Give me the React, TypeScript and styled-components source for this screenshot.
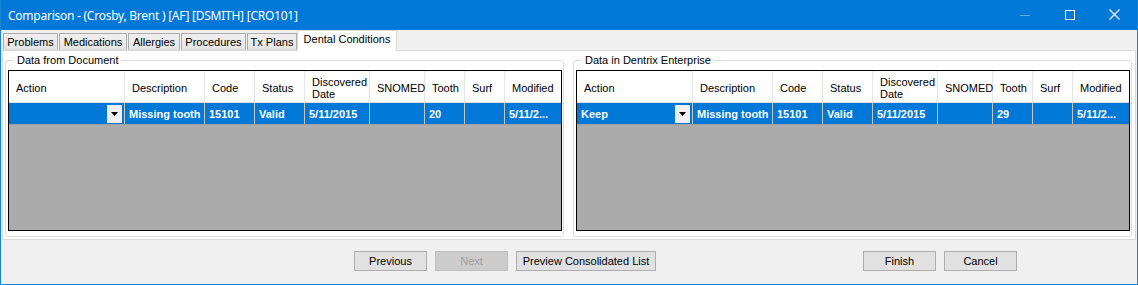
import styled, { createGlobalStyle } from "styled-components";

const GlobalStyle = createGlobalStyle`
  html, body {
    margin: 0;
    padding: 0;
    background: #ffffff;
  }
  * {
    box-sizing: border-box;
  }
`;

type Column = { title: string; width: number };

const columns: Column[] = [
  { title: "Action", width: 116 },
  { title: "Description", width: 80 },
  { title: "Code", width: 50 },
  { title: "Status", width: 50 },
  { title: "Discovered Date", width: 65 },
  { title: "SNOMED", width: 55 },
  { title: "Tooth", width: 40 },
  { title: "Surf", width: 40 },
  { title: "Modified", width: 56 },
];

const tabs = [
  { label: "Problems", width: 55 },
  { label: "Medications", width: 68 },
  { label: "Allergies", width: 52 },
  { label: "Procedures", width: 65 },
  { label: "Tx Plans", width: 50 },
  { label: "Dental Conditions", width: 100, active: true },
];

type Row = {
  action: string;
  description: string;
  code: string;
  status: string;
  discovered: string;
  snomed: string;
  tooth: string;
  surf: string;
  modified: string;
};

function ConditionsGrid({ row }: { row: Row }) {
  const values = [
    row.description,
    row.code,
    row.status,
    row.discovered,
    row.snomed,
    row.tooth,
    row.surf,
    row.modified,
  ];
  return (
    <Grid>
      <HeaderRow>
        {columns.map((c) => (
          <HeaderCell key={c.title} $width={c.width}>
            {c.title === "Discovered Date" ? (
              <span>
                Discovered
                <br />
                Date
              </span>
            ) : (
              c.title
            )}
          </HeaderCell>
        ))}
      </HeaderRow>
      <DataRow>
        <DataCell $width={columns[0].width}>
          <span>{row.action}</span>
          <DropButton>
            <svg width="7" height="4" viewBox="0 0 7 4">
              <path d="M0 0h7L3.5 4z" fill="#000" />
            </svg>
          </DropButton>
        </DataCell>
        {values.map((v, i) => (
          <DataCell key={i} $width={columns[i + 1].width}>
            {v}
          </DataCell>
        ))}
      </DataRow>
      <Filler />
    </Grid>
  );
}

export default function App() {
  return (
    <>
      <GlobalStyle />
      <Window>
        <TitleBar>
          <Title>Comparison - (Crosby, Brent ) [AF] [DSMITH] [CRO101]</Title>
          <Controls>
            <ControlButton>
              <svg width="10" height="10" viewBox="0 0 10 10">
                <path d="M0 5.5h10" stroke="#66aee8" strokeWidth="1" />
              </svg>
            </ControlButton>
            <ControlButton>
              <svg width="10" height="10" viewBox="0 0 10 10">
                <rect x="0.5" y="0.5" width="9" height="9" fill="none" stroke="#fff" strokeWidth="1" />
              </svg>
            </ControlButton>
            <ControlButton>
              <svg width="11" height="11" viewBox="0 0 11 11">
                <path d="M0.5 0.5l10 10M10.5 0.5l-10 10" stroke="#fff" strokeWidth="1.1" />
              </svg>
            </ControlButton>
          </Controls>
        </TitleBar>

        <TabStrip>
          {tabs.map((t) => (
            <Tab key={t.label} $width={t.width} $active={!!t.active}>
              {t.label}
            </Tab>
          ))}
        </TabStrip>

        <TabPage>
          <GroupBox>
            <Legend>Data from Document</Legend>
            <ConditionsGrid
              row={{
                action: "",
                description: "Missing tooth",
                code: "15101",
                status: "Valid",
                discovered: "5/11/2015",
                snomed: "",
                tooth: "20",
                surf: "",
                modified: "5/11/2...",
              }}
            />
          </GroupBox>
          <GroupBox>
            <Legend>Data in Dentrix Enterprise</Legend>
            <ConditionsGrid
              row={{
                action: "Keep",
                description: "Missing tooth",
                code: "15101",
                status: "Valid",
                discovered: "5/11/2015",
                snomed: "",
                tooth: "29",
                surf: "",
                modified: "5/11/2...",
              }}
            />
          </GroupBox>
        </TabPage>

        <Footer>
          <ButtonGroup>
            <Button $width={73}>Previous</Button>
            <Button $width={73} disabled>
              Next
            </Button>
            <Button $width={140}>Preview Consolidated List</Button>
          </ButtonGroup>
          <ButtonGroup $offset={207}>
            <Button $width={73}>Finish</Button>
            <Button $width={73}>Cancel</Button>
          </ButtonGroup>
        </Footer>
      </Window>
    </>
  );
}

const Window = styled.div`
  width: 1138px;
  height: 285px;
  background: #f0f0f0;
  border: 1px solid #1883d7;
  border-top: none;
  display: flex;
  flex-direction: column;
  font-family: "Liberation Sans", Arial, sans-serif;
  font-size: 11px;
  color: #000;
  overflow: hidden;
`;

const TitleBar = styled.div`
  height: 30px;
  margin: 0 -1px;
  background: #0078d7;
  display: flex;
  align-items: center;
  justify-content: space-between;
  padding-left: 8px;
`;

const Title = styled.div`
  color: #ffffff;
  font-family: "Noto Sans", "Open Sans", sans-serif;
  font-size: 12px;
  letter-spacing: -0.25px;
`;

const Controls = styled.div`
  display: flex;
  height: 100%;
  margin-right: 1px;
`;

const ControlButton = styled.div`
  width: 45px;
  height: 100%;
  display: flex;
  align-items: center;
  justify-content: center;
  padding-bottom: 1px;
`;

const TabStrip = styled.div`
  height: 20px;
  display: flex;
  align-items: flex-end;
  padding-left: 2px;
  gap: 1px;
  position: relative;
  z-index: 1;
`;

const Tab = styled.div<{ $width: number; $active: boolean }>`
  width: ${({ $width }) => $width}px;
  height: ${({ $active }) => ($active ? 21 : 17)}px;
  margin-bottom: ${({ $active }) => ($active ? -1 : 0)}px;
  margin-left: ${({ $active }) => ($active ? -1 : 0)}px;
  background: ${({ $active }) =>
    $active ? "#ffffff" : "linear-gradient(#f0f0f0, #e5e5e5)"};
  border: 1px solid ${({ $active }) => ($active ? "#d9d9d9" : "#acacac")};
  border-bottom: ${({ $active }) => ($active ? "none" : "1px solid #d9d9d9")};
  display: flex;
  align-items: center;
  justify-content: center;
  padding-bottom: ${({ $active }) => ($active ? 4 : 0)}px;
  white-space: nowrap;
`;

const TabPage = styled.div`
  height: 190px;
  margin: 0 1px;
  background: #ffffff;
  border: 1px solid #d9d9d9;
  display: flex;
  gap: 9px;
  padding: 3px 3px 2px 2px;
`;

const GroupBox = styled.fieldset`
  margin: 0;
  width: 560px;
  border: 1px solid #dcdcdc;
  border-radius: 3px;
  padding: 3px 1px 3px 2px;
  min-width: 0;
`;

const Legend = styled.legend`
  padding: 0 3px;
  margin-left: 6px;
  font-size: 11px;
  line-height: 13px;
`;

const Grid = styled.div`
  height: 161px;
  border: 1px solid #000;
  background: #ababab;
  display: flex;
  flex-direction: column;
`;

const HeaderRow = styled.div`
  display: flex;
  height: 32px;
  background: #ffffff;
  border-bottom: 1px solid #e0e0e0;
`;

const HeaderCell = styled.div<{ $width: number }>`
  width: ${({ $width }) => $width}px;
  flex-shrink: 0;
  border-right: 1px solid #e5e5e5;
  display: flex;
  align-items: center;
  padding: 2px 0 0 7px;
  line-height: 12px;
  white-space: nowrap;
  &:last-child {
    border-right: none;
  }
`;

const DataRow = styled.div`
  display: flex;
  height: 22px;
  background: #0078d7;
  border-bottom: 1px solid #a0a0a0;
  color: #ffffff;
  font-weight: bold;
`;

const DataCell = styled.div<{ $width: number }>`
  width: ${({ $width }) => $width}px;
  flex-shrink: 0;
  border-right: 1px solid #cdc4b1;
  display: flex;
  align-items: center;
  justify-content: space-between;
  padding: 0 2px 0 4px;
  white-space: nowrap;
  overflow: hidden;
  &:last-child {
    border-right: none;
  }
`;

const DropButton = styled.div`
  width: 15px;
  height: 18px;
  background: #f0f0f0;
  display: flex;
  align-items: center;
  justify-content: center;
`;

const Filler = styled.div`
  flex: 1;
`;

const Footer = styled.div`
  flex: 1;
  display: flex;
  align-items: flex-start;
  padding: 11px 0 0 353px;
`;

const ButtonGroup = styled.div<{ $offset?: number }>`
  display: flex;
  gap: 8px;
  margin-left: ${({ $offset }) => $offset ?? 0}px;
`;

const Button = styled.button<{ $width: number }>`
  width: ${({ $width }) => $width}px;
  height: 20px;
  background: #e1e1e1;
  border: 1px solid #adadad;
  font-family: "Liberation Sans", Arial, sans-serif;
  font-size: 11px;
  color: #000;
  padding: 0;
  &:disabled {
    background: #cccccc;
    border-color: #bfbfbf;
    color: #a0a0a0;
  }
`;
